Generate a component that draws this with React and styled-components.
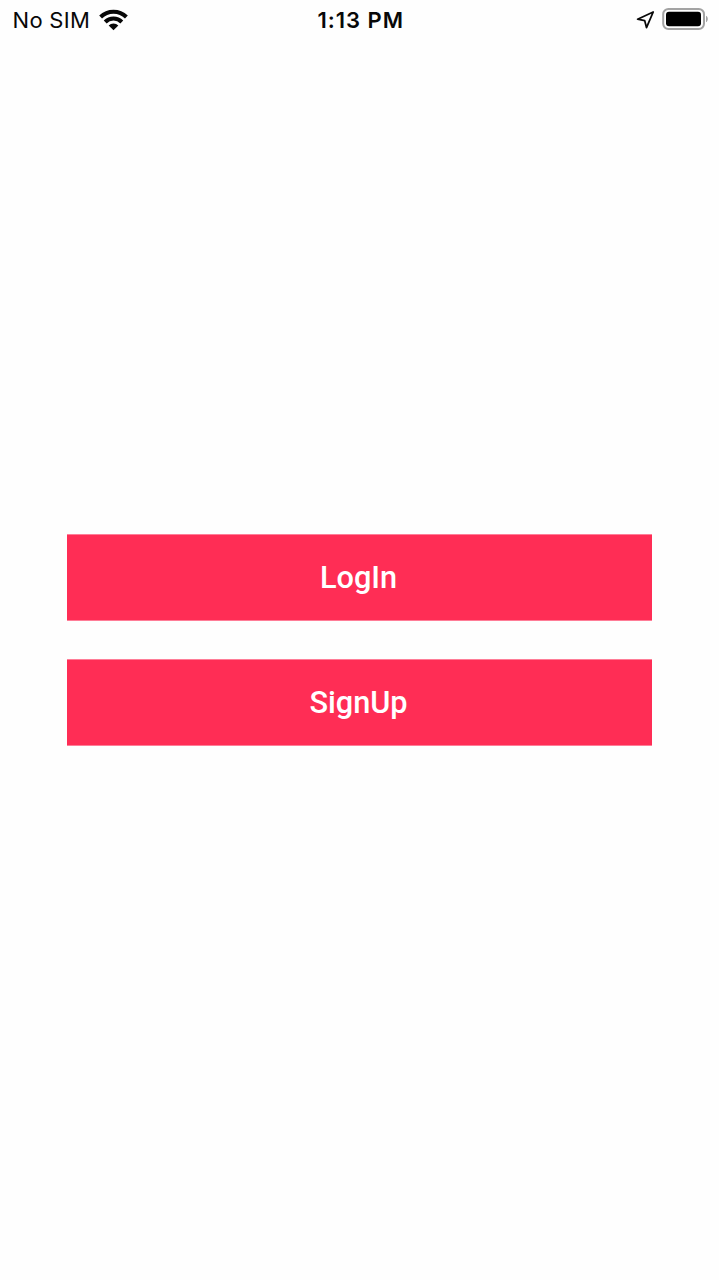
import React from 'react';
import styled, { createGlobalStyle } from 'styled-components';

const GlobalStyle = createGlobalStyle`
  *, *::before, *::after { box-sizing: border-box; }
  body { margin: 0; background: #fefefe; }
`;

const Screen = styled.div`
  display: flex;
  flex-direction: column;
  height: 1280px;
  background: #fefefe;
  overflow: hidden;
`;

const StatusBar = styled.header`
  display: grid;
  grid-template-columns: 1fr auto 1fr;
  align-items: center;
  height: 40px;
  padding: 0 10px 0 12.5px;
  font-family: Inter, 'Liberation Sans', sans-serif;
  font-size: 22px;
  line-height: 40px;
  color: #080808;
`;

const StatusGroup = styled.div`
  display: flex;
  align-items: center;
  justify-content: ${({ $end }) => ($end ? 'flex-end' : 'flex-start')};
  gap: ${({ $end }) => ($end ? '7px' : '9px')};
`;

const Carrier = styled.span`
  width: 77.5px;
  letter-spacing: 0.3px;
  white-space: nowrap;
`;

const Clock = styled.time`
  font-weight: 600;
  letter-spacing: 1px;
  white-space: nowrap;
`;

const Icon = styled.svg`
  display: block;
  flex: none;
`;

const Actions = styled.main`
  display: flex;
  flex: 1;
  flex-direction: column;
  gap: 38px;
  padding: 494px 67px 0;
`;

const ActionButton = styled.button`
  height: 87px;
  padding: 1px 2px 0 0;
  border: solid #ff7d97;
  border-width: 1px 0;
  background: #ff2d55;
  color: #fff;
  font-family: Roboto, 'Liberation Sans', sans-serif;
  font-size: 30.7px;
  font-weight: 500;
  line-height: 84px;
  text-align: center;
`;

const WifiIcon = () => (
  <Icon width="29" height="22" viewBox="0 0 29 22">
    <g fill="none" stroke="#080808" strokeWidth="4">
      <path d="M1.6 8A18.2 18.2 0 0 1 27.4 8" />
      <path d="M6.2 13A11.6 11.6 0 0 1 22.8 13" />
    </g>
    <path fill="#080808" d="M9.7 16.6A6.7 6.7 0 0 1 19.3 16.6L14.5 21.2Z" />
  </Icon>
);

const LocationIcon = () => (
  <Icon width="19" height="20" viewBox="0 0 19 20">
    <path
      d="M17.2 2L1.6 9.2L8.7 10.6L10.5 17.6Z"
      fill="none"
      stroke="#080808"
      strokeWidth="1.8"
      strokeLinejoin="round"
    />
  </Icon>
);

const BatteryIcon = () => (
  <Icon width="47" height="24" viewBox="0 0 47 24">
    <rect x="1.2" y="1" width="40.8" height="20" rx="5.2" fill="none" stroke="#a3a3a3" strokeWidth="2" />
    <rect x="4" y="3.7" width="35" height="14.6" rx="3" fill="#000" />
    <path d="M44 7.8C46.4 8.8 46.4 13.2 44 14.2Z" fill="#a3a3a3" />
  </Icon>
);

export default function App() {
  return (
    <>
      <GlobalStyle />
      <Screen>
        <StatusBar>
          <StatusGroup>
            <Carrier>No SIM</Carrier>
            <WifiIcon />
          </StatusGroup>
          <Clock>1:13 PM</Clock>
          <StatusGroup $end>
            <LocationIcon />
            <BatteryIcon />
          </StatusGroup>
        </StatusBar>
        <Actions>
          <ActionButton type="button">LogIn</ActionButton>
          <ActionButton type="button">SignUp</ActionButton>
        </Actions>
      </Screen>
    </>
  );
}
